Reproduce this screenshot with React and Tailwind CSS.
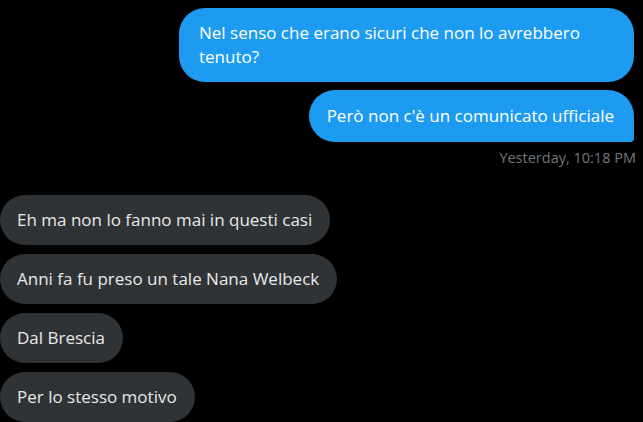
export default function App() {
  const font = { fontFamily: '"Open Sans", "Liberation Sans", Arial, sans-serif' };
  return (
    <div className="w-[643px] h-[422px] bg-black overflow-hidden text-[17px]" style={font}>
      <div className="flex flex-col items-end pr-[9px] pt-2 gap-2">
        <div className="w-[455px] bg-[#1d9bf0] text-white rounded-[26px] px-5 py-[13px] leading-6">
          Nel senso che erano sicuri che non lo avrebbero tenuto?
        </div>
        <div className="bg-[#1d9bf0] text-white rounded-[26px] rounded-br-[4px] pl-[18px] pr-5 py-[14px] leading-6">
          Però non c'è un comunicato ufficiale
        </div>
      </div>
      <div className="flex justify-end pr-[7px] mt-2 text-[14.5px] leading-4 text-[#71767b]">
        Yesterday, 10:18 PM
      </div>
      <div className="flex flex-col items-start gap-[9px] mt-[29px]">
        {[
          "Eh ma non lo fanno mai in questi casi",
          "Anni fa fu preso un tale Nana Welbeck",
          "Dal Brescia",
          "Per lo stesso motivo",
        ].map((t) => (
          <div key={t} className="h-[50px] flex items-center bg-[#2f3336] text-[#e7e9ea] rounded-[25px] pl-[17px] pr-[18px] leading-6">
            {t}
          </div>
        ))}
      </div>
    </div>
  );
}
